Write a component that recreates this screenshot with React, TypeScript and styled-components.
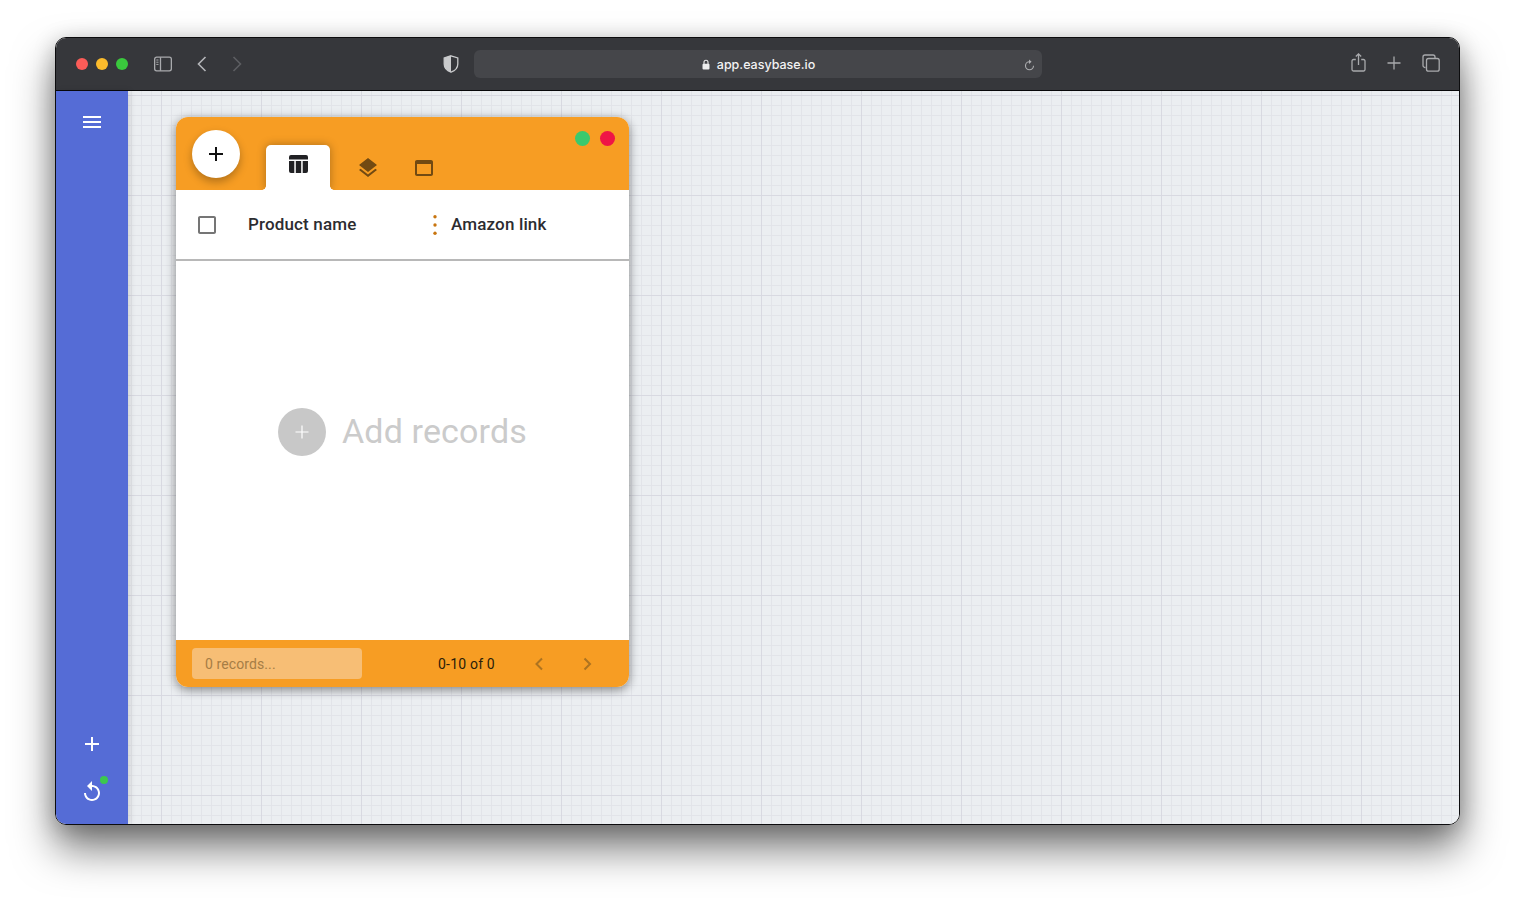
import React from "react";
import styled, { createGlobalStyle } from "styled-components";

const Global = createGlobalStyle`
  html, body { margin: 0; padding: 0; background: #fff; overflow: hidden; }
  body { font-family: Roboto, "Liberation Sans", sans-serif; }
`;

const Page = styled.div`
  height: 898px;
  box-sizing: border-box;
  padding: 37px 55px 0;
  background: #fff;
`;

const Window = styled.div`
  width: 1405px;
  height: 788px;
  box-sizing: border-box;
  border: 1px solid #0c0c0e;
  border-radius: 11px;
  overflow: hidden;
  display: flex;
  flex-direction: column;
  box-shadow: 0 24px 42px rgba(0, 0, 0, 0.52), 0 4px 22px rgba(0, 0, 0, 0.22);
`;

const TitleBar = styled.header`
  height: 53px;
  flex: none;
  box-sizing: border-box;
  border-bottom: 1px solid #08080a;
  background: #36373b;
  display: flex;
  align-items: center;
  padding: 0 19px 1px 20px;
`;

const Light = styled.span<{ $c: string; $ml?: number }>`
  width: 12px;
  height: 12px;
  border-radius: 50%;
  background: ${(p) => p.$c};
  margin-left: ${(p) => p.$ml ?? 0}px;
  flex: none;
`;

const BarIcon = styled.svg<{ $ml: number; $mt?: number }>`
  display: block;
  flex: none;
  margin-left: ${(p) => p.$ml}px;
  margin-top: ${(p) => p.$mt ?? 0}px;
`;

const UrlBar = styled.div`
  position: relative;
  width: 568px;
  height: 28px;
  margin-left: 15px;
  flex: none;
  background: #45464a;
  border-radius: 6px;
  display: flex;
  align-items: center;
  justify-content: center;
  gap: 7px;
  color: #f3f3f4;
  font: 500 12.5px Inter, "Liberation Sans", sans-serif;
  padding: 1px 0 0 1px;
  box-sizing: border-box;
`;

const Reload = styled.svg`
  position: absolute;
  right: 7px;
  top: 9px;
`;

const Main = styled.div`
  flex: 1;
  display: flex;
  min-height: 0;
`;

const Sidebar = styled.nav`
  width: 72px;
  flex: none;
  background: #556cd6;
  display: flex;
  flex-direction: column;
  align-items: center;
  padding: 19px 0 20px;
  box-sizing: border-box;
  box-shadow: 2px 0 6px rgba(0, 0, 0, 0.12);
  z-index: 1;
`;

const SideIcon = styled.svg`
  display: block;
  fill: #fff;
  width: 24px;
  height: 24px;
`;

const SideSpacer = styled.div`
  flex: 1;
`;

const UndoWrap = styled.div`
  position: relative;
  margin-top: 24px;
  height: 24px;
`;

const StatusDot = styled.span`
  position: absolute;
  left: 20px;
  top: -4px;
  width: 8px;
  height: 8px;
  border-radius: 50%;
  background: #3cc84f;
`;

const Canvas = styled.main`
  flex: 1;
  box-sizing: border-box;
  padding: 26px 48px;
  background-color: #ebeef1;
  background-image:
    linear-gradient(to right, #d8d9e1 1px, transparent 1px),
    linear-gradient(to bottom, #d8d9e1 1px, transparent 1px),
    linear-gradient(to right, #e2e4e9 1px, transparent 1px),
    linear-gradient(to bottom, #e2e4e9 1px, transparent 1px);
  background-size: 100px 100px, 100px 100px, 10px 10px, 10px 10px;
  background-position: 33px 4px, 33px 4px, 3px 4px, 3px 4px;
`;

const Card = styled.section`
  width: 453px;
  height: 570px;
  border-radius: 12px;
  background: #fff;
  overflow: hidden;
  display: flex;
  flex-direction: column;
  box-shadow: 0 3px 10px rgba(0, 0, 0, 0.3);
`;

const CardWrap = styled.div`
  width: 453px;
  border-radius: 12px;
  box-shadow: 0 2px 12px rgba(0, 0, 0, 0.18);
`;

const CardHeader = styled.div`
  height: 73px;
  flex: none;
  box-sizing: border-box;
  background: #f79d23;
  padding: 13px 14px 0 16px;
  display: flex;
  overflow: hidden;
`;

const Fab = styled.button`
  width: 48px;
  height: 48px;
  border: 0;
  padding: 0;
  border-radius: 50%;
  background: #fff;
  display: flex;
  align-items: center;
  justify-content: center;
  flex: none;
  box-shadow: 0 4px 8px rgba(0, 0, 0, 0.28);
`;

const ActiveTab = styled.div`
  position: relative;
  width: 64px;
  height: 45px;
  margin: 15px 0 0 26px;
  flex: none;
  background: #fff;
  border-radius: 5px 5px 0 0;
  display: flex;
  justify-content: center;
  padding-top: 7px;
  box-sizing: border-box;
  box-shadow: 0 0 10px rgba(0, 0, 0, 0.3);
  &::before,
  &::after {
    content: "";
    position: absolute;
    bottom: 0;
    width: 4px;
    height: 4px;
    background: radial-gradient(circle at 0 0, transparent 3.5px, #fff 4px);
  }
  &::before { left: -4px; }
  &::after {
    right: -4px;
    background: radial-gradient(circle at 100% 0, transparent 3.5px, #fff 4px);
  }
`;

const Tab = styled.div<{ $ml?: number }>`
  width: 56px;
  height: 45px;
  margin: 15px 0 0 ${(p) => p.$ml ?? 0}px;
  flex: none;
  display: flex;
  justify-content: center;
  padding-top: 11px;
  box-sizing: border-box;
`;

const TabIcon = styled.svg<{ $c?: string }>`
  display: block;
  width: 24px;
  height: 24px;
  fill: ${(p) => p.$c ?? "#724a12"};
`;

const Dots = styled.div`
  margin: 1px 0 0 auto;
  display: flex;
  gap: 10px;
  height: 15px;
`;

const Dot = styled.span<{ $c: string }>`
  width: 15px;
  height: 15px;
  border-radius: 50%;
  background: ${(p) => p.$c};
`;

const ColumnRow = styled.div`
  height: 71px;
  flex: none;
  box-sizing: border-box;
  border-bottom: 2px solid #b8b8b8;
  display: flex;
  align-items: center;
  padding: 1px 0 0 19px;
  color: #2c2c30;
  font-size: 17px;
  font-weight: 500;
  letter-spacing: 0.15px;
`;

const CheckIcon = styled.svg`
  display: block;
  width: 24px;
  height: 24px;
  fill: #757575;
  flex: none;
`;

const ColName = styled.span<{ $w?: number; $ml: number }>`
  width: ${(p) => (p.$w ? `${p.$w}px` : "auto")};
  margin: 0 0 2px ${(p) => p.$ml}px;
  flex: none;
`;

const MoreIcon = styled.svg`
  display: block;
  flex: none;
  width: 24px;
  height: 24px;
  fill: #c8750f;
`;

const EmptyArea = styled.div`
  flex: 1;
  display: flex;
  align-items: center;
  justify-content: center;
  gap: 16px;
  padding-bottom: 37px;
`;

const EmptyCircle = styled.span`
  width: 48px;
  height: 48px;
  border-radius: 50%;
  background: #c8c8c8;
  display: flex;
  align-items: center;
  justify-content: center;
`;

const EmptyText = styled.span`
  font-size: 34px;
  font-weight: 400;
  color: #cbcbcb;
  line-height: 48px;
  letter-spacing: 0.15px;
  margin-bottom: 2px;
`;

const CardFooter = styled.div`
  height: 47px;
  flex: none;
  background: #f79d23;
  display: flex;
  align-items: center;
  padding: 0 0 0 16px;
`;

const SearchBox = styled.div`
  width: 170px;
  height: 31px;
  box-sizing: border-box;
  padding-left: 13px;
  border-radius: 4px;
  background: #f7be75;
  color: #a67d45;
  font-size: 14px;
  letter-spacing: 0.1px;
  display: flex;
  align-items: center;
`;

const PageInfo = styled.span`
  margin-left: 76px;
  width: 89px;
  font-size: 14px;
  letter-spacing: 0.2px;
  color: #2a1d0a;
`;

const PagerIcon = styled.svg<{ $ml?: number }>`
  display: block;
  width: 24px;
  height: 24px;
  fill: none;
  stroke: #ad7320;
  stroke-width: 2;
  margin-left: ${(p) => p.$ml ?? 0}px;
`;

const stroke = { fill: "none", stroke: "#a9aaad", strokeWidth: 1.3 };

export default function App() {
  return (
    <Page>
      <Global />
      <Window>
        <TitleBar>
          <Light $c="#fb5c58" />
          <Light $c="#fbbb2c" $ml={8} />
          <Light $c="#3ac93d" $ml={8} />
          <BarIcon $ml={26} width="18" height="16" viewBox="0 0 18 16">
            <rect x="0.65" y="1.15" width="16.7" height="13.7" rx="2" {...stroke} />
            <path d="M6.5 1.2v13.6" {...stroke} />
            <path d="M2.3 4h2.2M2.3 6.2h2.2M2.3 8.4h2.2" {...stroke} strokeWidth={1} />
          </BarIcon>
          <BarIcon $ml={25} width="10" height="16" viewBox="0 0 10 16">
            <path d="M8.5 1 1.5 8l7 7" fill="none" stroke="#b5b6b9" strokeWidth="1.6" />
          </BarIcon>
          <BarIcon $ml={25} width="10" height="16" viewBox="0 0 10 16">
            <path d="M1.5 1l7 7-7 7" fill="none" stroke="#5d5e62" strokeWidth="1.6" />
          </BarIcon>
          <BarIcon $ml={201} width="16" height="18" viewBox="0 0 16 18">
            <path d="M8 .8 14.8 3v6c0 4-3 6.8-6.8 8.2C4.200 15.800 1.200 13 1.200 9V3z" fill="none" stroke="#c9cacc" strokeWidth="1.3" />
            <path d="M8 .8 1.200 3v6c0 4 3 6.800 6.800 8.200z" fill="#c9cacc" />
          </BarIcon>
          <UrlBar>
            <svg width="8" height="11" viewBox="0 0 8 11">
              <path d="M2 5V3.200a2 2 0 0 1 4 0V5" fill="none" stroke="#eee" strokeWidth="1.100" />
              <rect x="0.500" y="4.800" width="7" height="5.700" rx="1" fill="#eee" />
            </svg>
            app.easybase.io
            <Reload width="11" height="13" viewBox="0 0 11 13">
              <path d="M5.500 2.800a4 4 0 1 0 4 4" fill="none" stroke="#aeafb2" strokeWidth="1.100" />
              <path d="M5 .6 7.600 2.800 5 5z" fill="#aeafb2" />
            </Reload>
          </UrlBar>
          <BarIcon $ml={309} $mt={-2} width="15" height="19" viewBox="0 0 15 19">
            <path d="M4.800 6.500H2.500a1.500 1.500 0 0 0-1.500 1.500v8.500A1.500 1.500 0 0 0 2.500 18h10a1.500 1.500 0 0 0 1.500-1.500V8a1.500 1.500 0 0 0-1.500-1.500h-2.300" {...stroke} />
            <path d="M7.500 12V1M4.800 3.500 7.500.9l2.700 2.600" {...stroke} />
          </BarIcon>
          <BarIcon $ml={20} $mt={-2} width="16" height="16" viewBox="0 0 16 16">
            <path d="M8 1.500v13M1.500 8h13" {...stroke} />
          </BarIcon>
          <BarIcon $ml={20} $mt={-2} width="18" height="18" viewBox="0 0 18 18">
            <path d="M3.500 13.500H3A2 2 0 0 1 1 11.500V3a2 2 0 0 1 2-2h8a2 2 0 0 1 2 2v1" {...stroke} />
            <rect x="4.500" y="4.500" width="12.700" height="12.700" rx="2" {...stroke} />
          </BarIcon>
        </TitleBar>
        <Main>
          <Sidebar>
            <SideIcon viewBox="0 0 24 24">
              <path d="M3 18h18v-2H3v2zm0-5h18v-2H3v2zm0-7v2h18V6H3z" />
            </SideIcon>
            <SideSpacer />
            <SideIcon viewBox="0 0 24 24">
              <path d="M19 13h-6v6h-2v-6H5v-2h6V5h2v6h6v2z" />
            </SideIcon>
            <UndoWrap>
              <SideIcon viewBox="0 0 24 24">
                <path d="M12 5V1L7 6l5 5V7c3.310 0 6 2.690 6 6s-2.690 6-6 6-6-2.690-6-6H4c0 4.420 3.580 8 8 8s8-3.580 8-8-3.580-8-8-8z" />
              </SideIcon>
              <StatusDot />
            </UndoWrap>
          </Sidebar>
          <Canvas>
            <CardWrap>
              <Card>
                <CardHeader>
                  <Fab>
                    <TabIcon $c="#111" viewBox="0 0 24 24">
                      <path d="M19 13h-6v6h-2v-6H5v-2h6V5h2v6h6v2z" />
                    </TabIcon>
                  </Fab>
                  <ActiveTab>
                    <TabIcon $c="#212124" viewBox="-0.5 0 24 24">
                      <path d="M4.500 3h15A2 2 0 0 1 21.500 5v2.500h-19V5a2 2 0 0 1 2-2zM2.500 9h5.300v12H4.500a2 2 0 0 1-2-2zM9.300 9h5.400v12H9.300zM16.200 9h5.300v10a2 2 0 0 1-2 2h-3.300z" />
                    </TabIcon>
                  </ActiveTab>
                  <Tab $ml={10}>
                    <TabIcon viewBox="0 0 24 24">
                      <path d="M11.990 18.540l-7.370-5.730L3 14.070l9 7 9-7-1.630-1.270-7.380 5.740zM12 16l7.360-5.730L21 9l-9-7-9 7 1.630 1.270L12 16z" />
                    </TabIcon>
                  </Tab>
                  <Tab>
                    <TabIcon viewBox="0 0 24 24">
                      <path d="M19 4H5c-1.110 0-2 .9-2 2v12c0 1.100.89 2 2 2h14c1.100 0 2-.9 2-2V6c0-1.100-.89-2-2-2zm0 14H5V8h14v10z" />
                    </TabIcon>
                  </Tab>
                  <Dots>
                    <Dot $c="#3bc96d" />
                    <Dot $c="#ef1546" />
                  </Dots>
                </CardHeader>
                <ColumnRow>
                  <CheckIcon viewBox="0 0 24 24">
                    <path d="M19 5v14H5V5h14m0-2H5c-1.100 0-2 .9-2 2v14c0 1.100.9 2 2 2h14c1.100 0 2-.9 2-2V5c0-1.100-.9-2-2-2z" />
                  </CheckIcon>
                  <ColName $w={175} $ml={29}>Product name</ColName>
                  <MoreIcon viewBox="0 0 24 24">
                    <circle cx="12" cy="3.700" r="1.700" />
                    <circle cx="12" cy="12" r="1.700" />
                    <circle cx="12" cy="20.300" r="1.700" />
                  </MoreIcon>
                  <ColName $ml={4}>Amazon link</ColName>
                </ColumnRow>
                <EmptyArea>
                  <EmptyCircle>
                    <TabIcon $c="#fff" viewBox="0 0 24 24">
                      <path d="M18.500 12.600h-5.900v5.900h-1.200v-5.900H5.500v-1.200h5.900V5.500h1.200v5.900h5.900z" />
                    </TabIcon>
                  </EmptyCircle>
                  <EmptyText>Add records</EmptyText>
                </EmptyArea>
                <CardFooter>
                  <SearchBox>0 records...</SearchBox>
                  <PageInfo>0-10 of 0</PageInfo>
                  <PagerIcon viewBox="0 0 24 24">
                    <path d="M15 6.500 9.500 12l5.500 5.500" />
                  </PagerIcon>
                  <PagerIcon $ml={24} viewBox="0 0 24 24">
                    <path d="M9.500 6.500 15 12l-5.500 5.500" />
                  </PagerIcon>
                </CardFooter>
              </Card>
            </CardWrap>
          </Canvas>
        </Main>
      </Window>
    </Page>
  );
}
